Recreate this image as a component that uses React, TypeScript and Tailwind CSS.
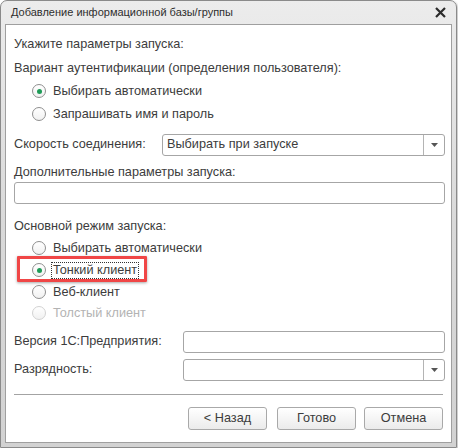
import React from 'react';

const font = { fontFamily: '"Liberation Sans", Arial, sans-serif' };

function Radio({ label, checked, disabled, focused }: { label: string; checked?: boolean; disabled?: boolean; focused?: boolean }) {
  return (
    <div className="flex h-[20px] items-center pl-[18px]">
      <span
        className={`flex h-[14px] w-[14px] items-center justify-center rounded-full border bg-gradient-to-b from-white to-[#f1f1f1] ${
          disabled ? 'border-[#d2d2d2]' : 'border-[#8f8f8f]'
        }`}
      >
        {checked && <span className="h-[5px] w-[5px] rounded-full bg-[#1e9b57]" />}
      </span>
      <span
        className={`ml-[6px] px-[1px] leading-[15px] ${disabled ? 'text-[#b3b3b3]' : 'text-[#3c3c3c]'} ${
          focused ? 'outline-1 outline-dotted outline-[#333]' : ''
        }`}
      >
        {label}
      </span>
    </div>
  );
}

function Arrow() {
  return (
    <div className="flex w-[21px] items-center justify-center border-l border-[#b4b4b4]">
      <svg width="7" height="4" viewBox="0 0 7 4">
        <path d="M0 0h7L3.5 4z" fill="#555" />
      </svg>
    </div>
  );
}

function Btn({ children, className }: { children: React.ReactNode; className?: string }) {
  return (
    <div
      className={`flex h-[23px] w-[79px] items-center justify-center rounded-[3px] border border-[#a9a9a9] bg-gradient-to-b from-white to-[#ebebeb] text-[#3c3c3c] ${className ?? ''}`}
    >
      {children}
    </div>
  );
}

export default function App() {
  return (
    <div className="h-[448px] w-[458px] bg-white text-[12.7px]" style={font}>
      <div className="flex h-[448px] w-[457px] flex-col rounded-t-[7px] border border-[#8a8a8a] bg-gradient-to-b from-[#ececec] via-[#d9d9d9] to-[#d2d2d2] shadow-[1px_1px_2px_rgba(0,0,0,0.25)]">
        {/* title bar */}
        <div className="flex h-[23px] items-center justify-between pl-[10px] pr-[10px]">
          <span className="text-[11px] text-[#2e2e2e]">Добавление информационной базы/группы</span>
          <svg width="11" height="11" viewBox="0 0 11 11">
            <path d="M1 1l9 9M10 1l-9 9" stroke="#2b2b2b" strokeWidth="2.2" />
          </svg>
        </div>

        {/* client area */}
        <div className="relative mx-[4px] mb-[4px] flex flex-1 flex-col border border-[#9f9f9f] bg-white pl-[8px] pr-[6px] text-[#3c3c3c]">
          <div className="mt-[10px] flex h-[20px] items-center">Укажите параметры запуска:</div>
          <div className="mt-[4px] flex h-[20px] items-center">Вариант аутентификации (определения пользователя):</div>
          <div className="mt-[2px]">
            <Radio label="Выбирать автоматически" checked />
          </div>
          <div className="mt-[3px]">
            <Radio label="Запрашивать имя и пароль" />
          </div>

          <div className="mt-[10px] flex h-[22px] items-center">
            <span className="w-[148px]">Скорость соединения:</span>
            <div className="flex h-[22px] flex-1 rounded-[3px] border border-[#a6a6a6]">
              <span className="flex flex-1 items-center pl-[4px]">Выбирать при запуске</span>
              <Arrow />
            </div>
          </div>

          <div className="mt-[8px] flex h-[18px] items-center">Дополнительные параметры запуска:</div>
          <div className="h-[22px] rounded-[3px] border border-[#a6a6a6]" />

          <div className="mt-[13px] flex h-[20px] items-center">Основной режим запуска:</div>
          <div className="mt-[1px]">
            <Radio label="Выбирать автоматически" />
          </div>
          <div className="mt-[2px]">
            <Radio label="Тонкий клиент" checked focused />
          </div>
          <div className="mt-[2px]">
            <Radio label="Веб-клиент" />
          </div>
          <div className="mt-[1px]">
            <Radio label="Толстый клиент" disabled />
          </div>

          <div className="mt-[8px] flex h-[22px] items-center">
            <span className="w-[169px]">Версия 1С:Предприятия:</span>
            <div className="h-[22px] flex-1 rounded-[3px] border border-[#a6a6a6]" />
          </div>
          <div className="mt-[6px] flex h-[22px] items-center">
            <span className="w-[169px]">Разрядность:</span>
            <div className="flex h-[22px] flex-1 rounded-[3px] border border-[#a6a6a6]">
              <span className="flex-1" />
              <Arrow />
            </div>
          </div>

          <div className="mt-[13px] mr-[2px] border-t border-[#a3a3a3]" />

          <div className="mt-[12px] flex justify-end pr-[2px]">
            <Btn>&lt; Назад</Btn>
            <Btn className="ml-[10px]">Готово</Btn>
            <Btn className="ml-[8px]">Отмена</Btn>
          </div>

          {/* red highlight annotation */}
          <div className="pointer-events-none absolute left-[11px] top-[231px] h-[26px] w-[130px] rounded-[1px] border-[3px] border-[#f04646] shadow-[0_1px_3px_rgba(0,0,0,0.35)]" />
        </div>
      </div>
    </div>
  );
}
